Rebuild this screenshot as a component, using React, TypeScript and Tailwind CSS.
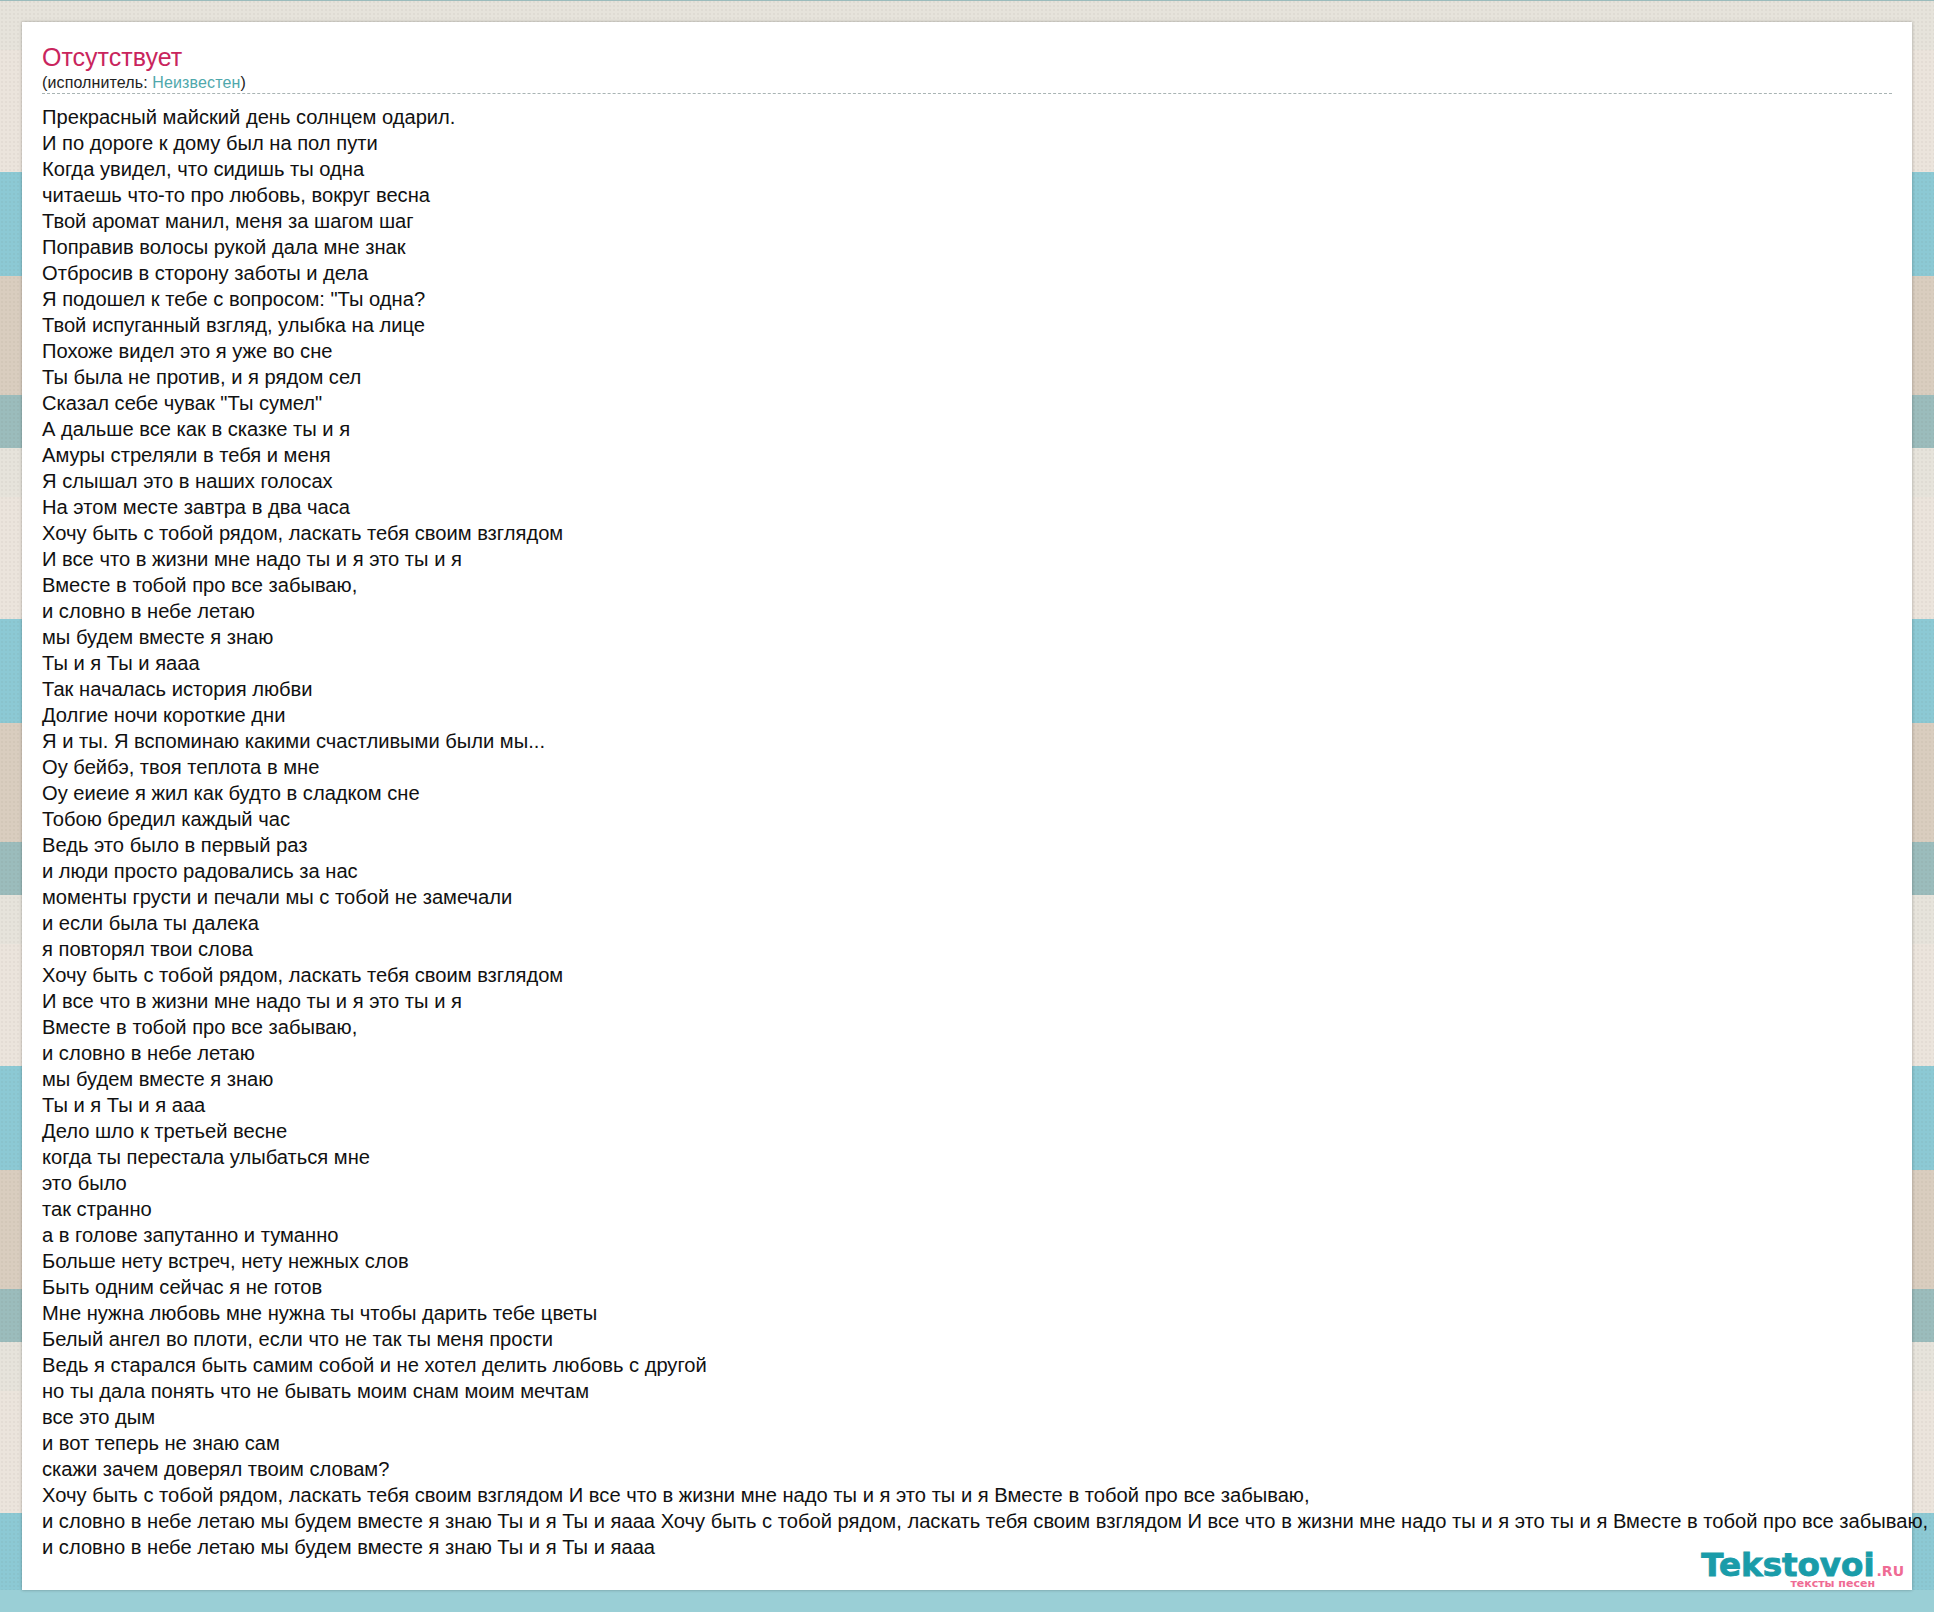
const lines = [
  'Прекрасный майский день солнцем одарил.',
  'И по дороге к дому был на пол пути',
  'Когда увидел, что сидишь ты одна',
  'читаешь что-то про любовь, вокруг весна',
  'Твой аромат манил, меня за шагом шаг',
  'Поправив волосы рукой дала мне знак',
  'Отбросив в сторону заботы и дела',
  'Я подошел к тебе с вопросом: "Ты одна?',
  'Твой испуганный взгляд, улыбка на лице',
  'Похоже видел это я уже во сне',
  'Ты была не против, и я рядом сел',
  'Сказал себе чувак "Ты сумел"',
  'А дальше все как в сказке ты и я',
  'Амуры стреляли в тебя и меня',
  'Я слышал это в наших голосах',
  'На этом месте завтра в два часа',
  'Хочу быть с тобой рядом, ласкать тебя своим взглядом',
  'И все что в жизни мне надо ты и я это ты и я',
  'Вместе в тобой про все забываю,',
  'и словно в небе летаю',
  'мы будем вместе я знаю',
  'Ты и я Ты и яааа',
  'Так началась история любви',
  'Долгие ночи короткие дни',
  'Я и ты. Я вспоминаю какими счастливыми были мы...',
  'Оу бейбэ, твоя теплота в мне',
  'Оу еиеие я жил как будто в сладком сне',
  'Тобою бредил каждый час',
  'Ведь это было в первый раз',
  'и люди просто радовались за нас',
  'моменты грусти и печали мы с тобой не замечали',
  'и если была ты далека',
  'я повторял твои слова',
  'Хочу быть с тобой рядом, ласкать тебя своим взглядом',
  'И все что в жизни мне надо ты и я это ты и я',
  'Вместе в тобой про все забываю,',
  'и словно в небе летаю',
  'мы будем вместе я знаю',
  'Ты и я Ты и я ааа',
  'Дело шло к третьей весне',
  'когда ты перестала улыбаться мне',
  'это было',
  'так странно',
  'а в голове запутанно и туманно',
  'Больше нету встреч, нету нежных слов',
  'Быть одним сейчас я не готов',
  'Мне нужна любовь мне нужна ты чтобы дарить тебе цветы',
  'Белый ангел во плоти, если что не так ты меня прости',
  'Ведь я старался быть самим собой и не хотел делить любовь с другой',
  'но ты дала понять что не бывать моим снам моим мечтам',
  'все это дым',
  'и вот теперь не знаю сам',
  'скажи зачем доверял твоим словам?',
  'Хочу быть с тобой рядом, ласкать тебя своим взглядом И все что в жизни мне надо ты и я это ты и я Вместе в тобой про все забываю,',
  'и словно в небе летаю мы будем вместе я знаю Ты и я Ты и яааа Хочу быть с тобой рядом, ласкать тебя своим взглядом И все что в жизни мне надо ты и я это ты и я Вместе в тобой про все забываю,',
  'и словно в небе летаю мы будем вместе я знаю Ты и я Ты и яааа',
];

export default function App() {
  return (
    <div className="h-[1612px] overflow-hidden bg-[#ebe4dc] bg-[radial-gradient(rgba(90,80,60,0.05)_1px,transparent_1px),linear-gradient(#e6e3db_0,#e6e3db_49px,#ebe4dc_49px,#ebe4dc_171px,#8cc9d4_171px,#8cc9d4_275px,#d9cdbf_275px,#d9cdbf_394px,#9bbcbc_394px,#9bbcbc_447px)] bg-[length:4px_4px,100%_447px] bg-[position:0_0,0_1px] font-['Liberation_Sans',Arial,sans-serif]">
      <div className="px-[22px] pt-[22px]">
        <div className="relative h-[1568px] bg-white px-5 pt-[20px] shadow-[0_0_3px_rgba(0,0,0,0.3)]">
          <h1 className="text-[25px] leading-[30px] font-normal text-[#c9255d]">Отсутствует</h1>
          <div className="border-b border-dashed border-[#a9b4b4] pt-[1px] text-[16px] leading-[20px] tracking-[0.12px] text-[#222]">
            (исполнитель: <a className="text-[#4fa8ac]">Неизвестен</a>)
          </div>
          <div className="mt-[10px] text-[20.15px] leading-[26px] whitespace-nowrap text-[#111]">
            {lines.map((line, i) => (
              <div key={i}>{line}</div>
            ))}
          </div>
          <div className="absolute right-[8px] bottom-[2px] flex flex-col items-end font-['DejaVu_Sans',sans-serif] font-bold text-[#ef6b94]">
            <div className="flex items-baseline gap-[2px]">
              <span className="text-[32.5px] leading-[28px] text-[#1a9ca9] [-webkit-text-stroke:0.9px_#1a9ca9]">Tekstovoi</span>
              <span className="text-[14px] leading-[14px]">.RU</span>
            </div>
            <span className="mr-[29px] text-[11px] leading-[9px]">тексты песен</span>
          </div>
        </div>
      </div>
      <div className="h-[22px] bg-[#9acfd6]" />
    </div>
  );
}
